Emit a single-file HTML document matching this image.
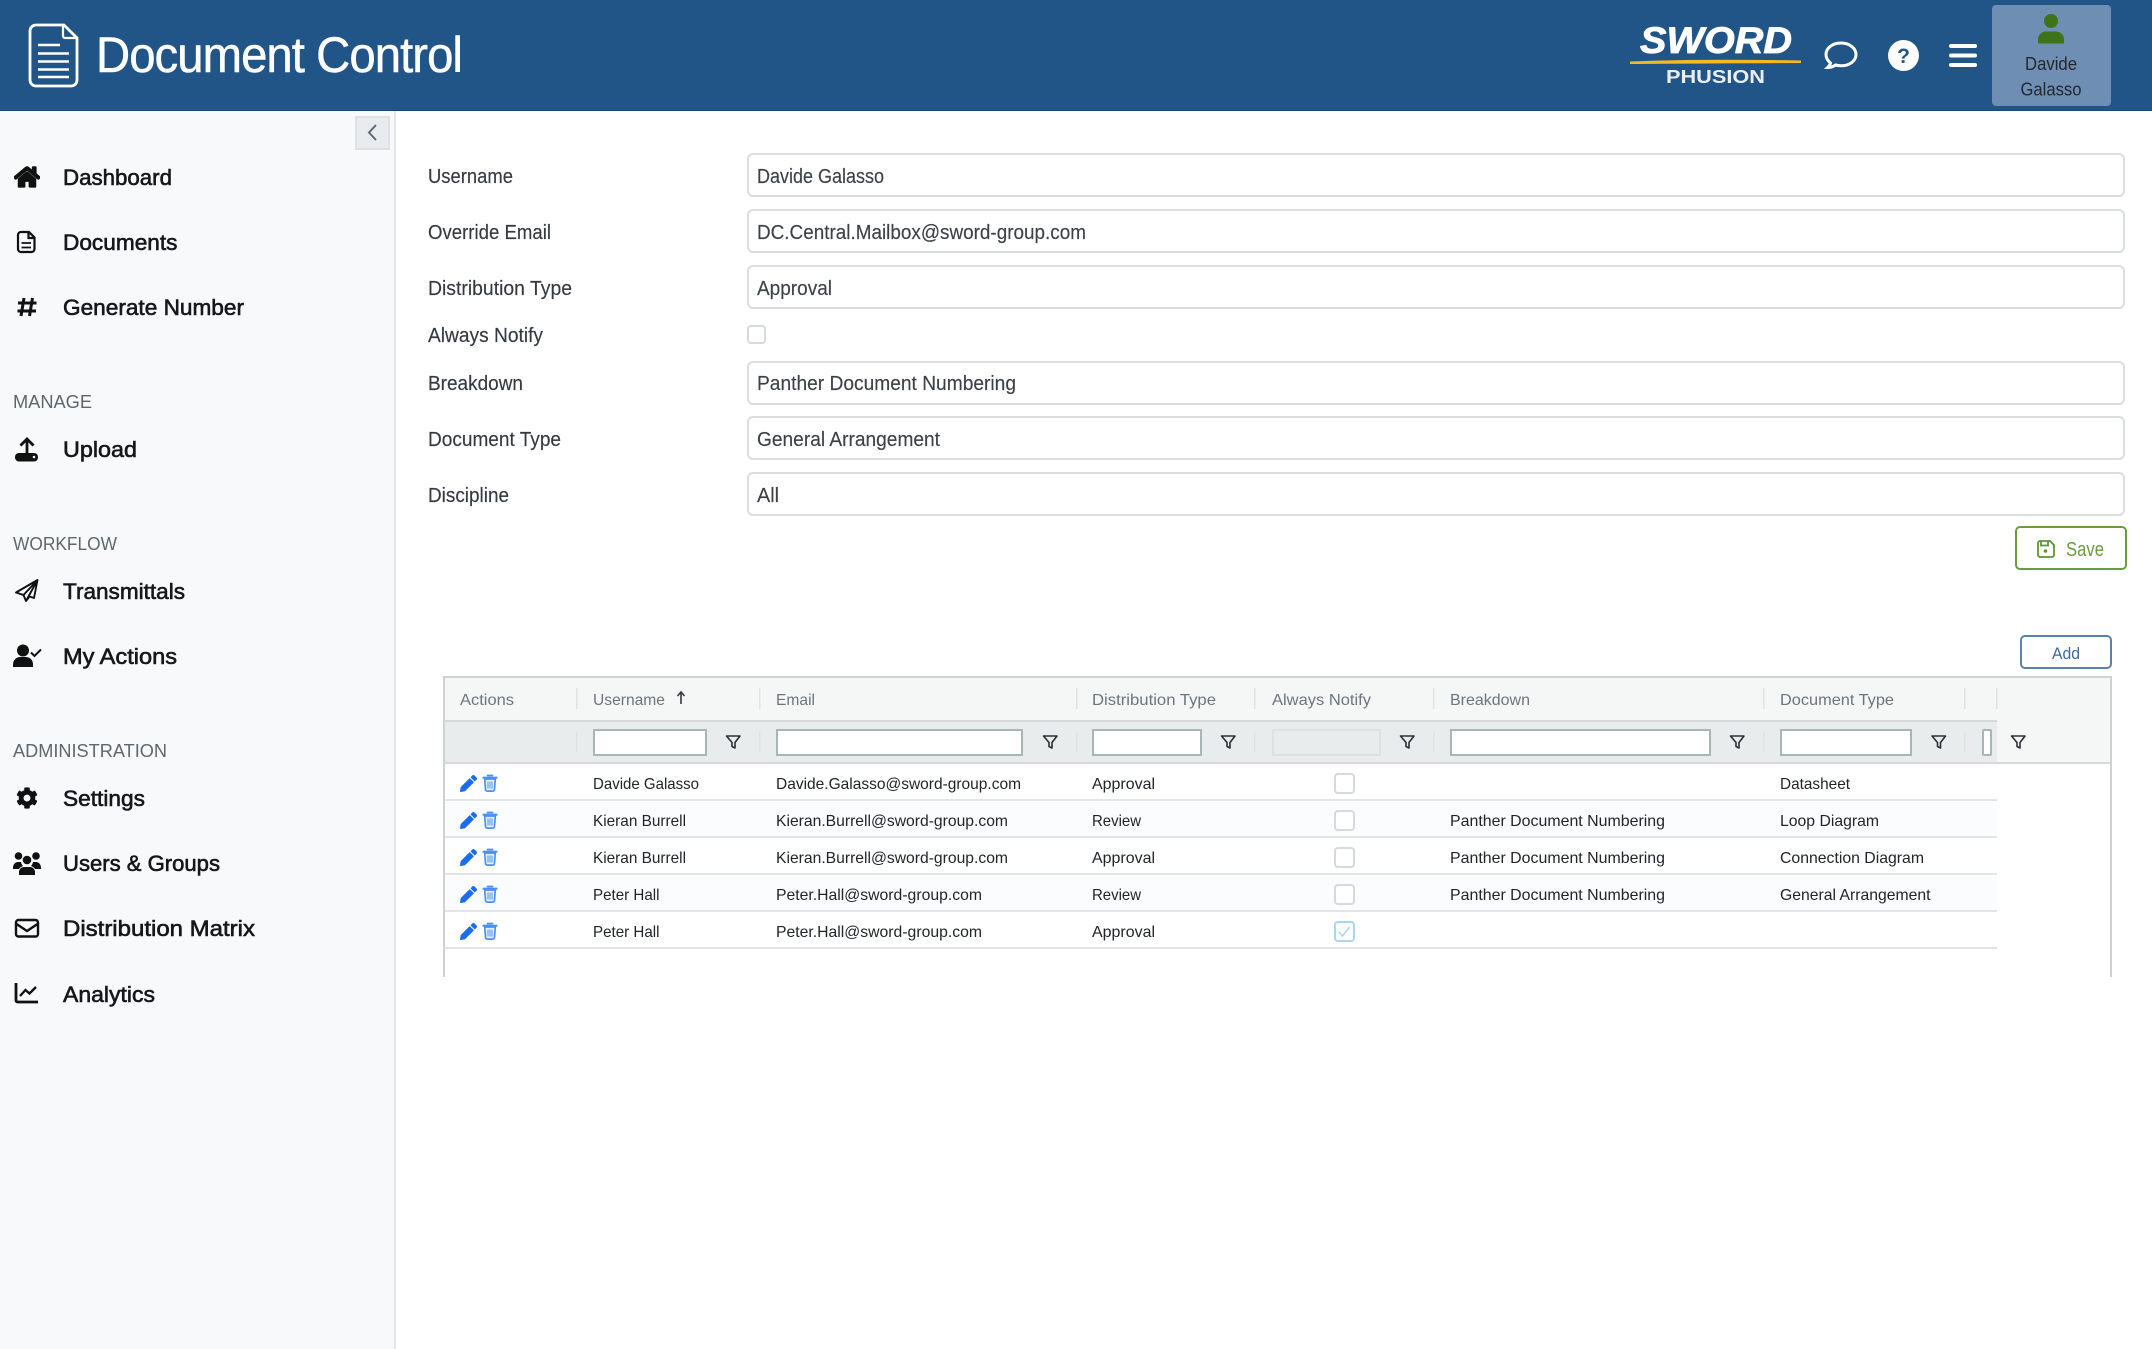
<!DOCTYPE html>
<html lang="en">
<head>
<meta charset="utf-8">
<title>Document Control</title>
<style>
html,body{margin:0;padding:0;background:#fff;width:2152px;height:1349px;overflow:hidden}
svg{display:block}
text{font-family:"Liberation Sans",sans-serif;white-space:pre}
.nav{font-size:22px;fill:#15181b;stroke:#15181b;stroke-width:.6px}
.sec{font-size:18px;fill:#5f676e}
.lab{font-size:20px;fill:#343a40;stroke:#343a40;stroke-width:.15px}
.val{font-size:20px;fill:#3c4248;stroke:#3c4248;stroke-width:.15px}
.th{font-size:16px;fill:#6c757d}
.td{font-size:16px;fill:#212529}
.inp{fill:#fff;stroke:#dadee2;stroke-width:2}
.fi{fill:#fff;stroke:#a9b6b6;stroke-width:2}
.sep{fill:#dfe3e4}
.rl{fill:#e1e5e8}
.cb{fill:#fff;stroke:#d6dade;stroke-width:2}
.flt{fill:none;stroke:#2b3036;stroke-width:1.600;stroke-linejoin:round}
</style>
</head>
<body>
<svg xmlns="http://www.w3.org/2000/svg" width="2152" height="1349" viewBox="0 0 2152 1349">
<defs>
<g id="pen"><svg x="0" y="0" width="17" height="17" viewBox="0 0 512 512"><path fill="#1c6cf0" d="M497.900 142.100l-46.100 46.100c-4.700 4.700-12.300 4.700-17 0l-111-111c-4.700-4.700-4.700-12.300 0-17l46.100-46.100c18.700-18.700 49.100-18.700 67.900 0l60.100 60.100c18.800 18.700 18.800 49.100 0 67.900zM284.200 99.800L21.600 362.400.4 483.900c-2.900 16.400 11.400 30.600 27.800 27.800l121.500-21.300 262.600-262.600c4.700-4.700 4.700-12.300 0-17l-111-111c-4.800-4.700-12.400-4.700-17.100 0z"/></svg></g>
<g id="trash" fill="none" stroke="#4a92f2">
  <path d="M27.500 4h5" stroke-width="1.800" stroke-linecap="round"/>
  <path d="M23.500 6.200h13" stroke-width="2.200" stroke-linecap="round"/>
  <path d="M24.700 7.500l.8 10.500a2 2 0 0 0 2 1.600h5a2 2 0 0 0 2-1.600l.8-10.500z" stroke-width="1.700" fill="#e6f0fd"/>
  <path d="M28 10v7M30 10v7M32 10v7" stroke-width="1"/>
</g>
<path id="funnel" class="flt" d="M0 0h13.500L8.500 6.500V12L5.500 10.500V6.500z"/>
</defs>

<!-- sidebar -->
<rect x="0" y="111" width="394" height="1238" fill="#f8f9fa"/>
<rect x="394" y="111" width="2" height="1238" fill="#e4e7ea"/>

<!-- header -->
<rect x="0" y="0" width="2152" height="111" fill="#225587"/>
<rect x="0" y="110" width="2152" height="1" fill="#1c4a78"/>
<g fill="none" stroke="#fff">
  <path d="M36 25h28l13 13v42a6 6 0 0 1-6 6H36a6 6 0 0 1-6-6V31a6 6 0 0 1 6-6z" stroke-width="2.800"/>
  <path d="M63 26v10a2 2 0 0 0 2 2h11" stroke-width="2.200"/>
  <path d="M38 45h22M38 53.500h31M38 61.500h31M38 69.500h31M38 77h31" stroke-width="2.400"/>
</g>
<text x="96" y="72" font-size="50" fill="#fff" stroke="#fff" stroke-width=".5" textLength="366" lengthAdjust="spacingAndGlyphs" letter-spacing="-1">Document Control</text>

<!-- logo -->
<text x="1640" y="53" font-size="37" font-weight="bold" font-style="italic" fill="#fff" stroke="#fff" stroke-width=".8" textLength="152" lengthAdjust="spacingAndGlyphs">SWORD</text>
<path d="M1630 61.500Q1700 58.500 1801 60.500L1801 63Q1700 63.500 1630 64z" fill="#f4b820"/>
<text x="1666" y="83" font-size="18" font-weight="bold" fill="#e9eef3" textLength="99" lengthAdjust="spacingAndGlyphs">PHUSION</text>

<!-- header icons -->
<path d="M1841 43c-8.500 0-15 5-15 11.500 0 3.500 2 6.500 4.500 8.500-.3 1.500-1.500 3-3 4.500 3 0 6-1 8-2.500 1.800.5 3.500.8 5.500.8 8.500 0 15-5 15-11.300S1849.500 43 1841 43z" fill="none" stroke="#fff" stroke-width="3"/>
<ellipse cx="1903.500" cy="55.500" rx="15.500" ry="15.500" fill="#fff"/>
<text x="1903.500" y="63" font-size="21" font-weight="bold" fill="#225587" text-anchor="middle">?</text>
<g fill="#fff"><rect x="1949" y="44" width="28" height="4" rx="2"/><rect x="1949" y="53.500" width="28" height="4" rx="2"/><rect x="1949" y="63" width="28" height="4" rx="2"/></g>
<rect x="1992" y="5" width="119" height="101" rx="4" fill="#6e8fb3"/>
<circle cx="2051" cy="21" r="7" fill="#3f7317"/>
<path d="M2038 43.500v-4c0-4.500 3.500-8 8-8h10c4.500 0 8 3.500 8 8v4z" fill="#3f7317"/>
<text x="2025" y="70" font-size="18" fill="#23282e" textLength="52" lengthAdjust="spacingAndGlyphs">Davide</text>
<text x="2020.500" y="95.500" font-size="18" fill="#23282e" textLength="61" lengthAdjust="spacingAndGlyphs">Galasso</text>

<!-- collapse -->
<rect x="356" y="117" width="33" height="32" fill="#e9ecef" stroke="#dee2e6" stroke-width="2"/>
<path d="M376 125l-7 7.500 7 7.500" fill="none" stroke="#5f6a75" stroke-width="2"/>

<!-- nav icons -->
<svg x="14" y="164" width="26" height="26" viewBox="0 0 576 576"><path fill="#111" stroke="#111" stroke-width="26" stroke-linejoin="round" transform="translate(0,32)" d="M280.370 148.260L96 300.110V464a16 16 0 0 0 16 16l112.060-.29a16 16 0 0 0 15.920-16V368a16 16 0 0 1 16-16h64a16 16 0 0 1 16 16v95.640a16 16 0 0 0 16 16.050L464 480a16 16 0 0 0 16-16V300L295.670 148.260a12.190 12.190 0 0 0-15.300 0zM571.600 251.470L488 182.560V44.050a12 12 0 0 0-12-12h-56a12 12 0 0 0-12 12v72.610L318.470 43a48 48 0 0 0-61 0L4.340 251.470a12 12 0 0 0-1.600 16.900l25.500 31A12 12 0 0 0 45.150 301l235.220-193.740a12.190 12.190 0 0 1 15.300 0L530.900 301a12 12 0 0 0 16.900-1.600l25.500-31a12 12 0 0 0-1.700-16.930z"/></svg>
<g fill="none" stroke="#111" stroke-width="2.200">
  <path d="M21 232h8l5.500 5.500V249a3 3 0 0 1-3 3H21a3 3 0 0 1-3-3v-14a3 3 0 0 1 3-3z"/>
  <path d="M28.500 232.500v5.500h5.500"/>
  <path d="M21.500 243h9.500M21.500 247.500h9.500" stroke-width="1.800"/>
</g>
<path d="M24 298l-3 18M32.500 298l-3 18M18 303h18.500M17.500 311h18.500" fill="none" stroke="#111" stroke-width="3"/>
<path d="M27 455V439M20.500 445.500L27 439l6.500 6.500" fill="none" stroke="#111" stroke-width="2.800"/>
<rect x="15" y="453" width="23" height="8.500" rx="4" fill="#111"/>
<circle cx="34" cy="457" r="1.300" fill="#f8f9fa"/>
<path d="M37.500 580L16 592.500l7.500 2.500 2.500 6 3.500-4.500 4.500 1.500zM23.500 595L37.500 580 26 601" fill="none" stroke="#111" stroke-width="1.900" stroke-linejoin="round"/>
<circle cx="23" cy="650.500" r="6" fill="#111"/>
<path d="M13 667v-2.500c0-4.500 3.500-7.500 7.500-7.500h5c4.500 0 7.500 3 7.500 7.500v2.500z" fill="#111"/>
<path d="M31 652.500l3.500 3.500 6.500-6.500" fill="none" stroke="#111" stroke-width="2"/>
<svg x="16" y="787" width="22" height="22" viewBox="0 0 512 512"><path fill="#111" d="M487.400 315.700l-42.600-24.600c4.300-23.200 4.300-47 0-70.200l42.600-24.600c4.900-2.800 7.100-8.600 5.500-14-11.100-35.600-30-67.800-54.700-94.600-3.800-4.100-10-5.100-14.800-2.300L380.800 110c-17.900-15.400-38.500-27.300-60.800-35.100V25.800c0-5.600-3.900-10.500-9.400-11.700-36.700-8.200-74.300-7.800-109.200 0-5.500 1.200-9.400 6.100-9.400 11.700V75c-22.200 7.900-42.800 19.800-60.800 35.100L88.700 85.500c-4.900-2.800-11-1.900-14.800 2.300-24.700 26.700-43.600 58.900-54.700 94.600-1.700 5.400.6 11.200 5.500 14L67.300 221c-4.300 23.200-4.300 47 0 70.200l-42.600 24.600c-4.900 2.800-7.100 8.600-5.500 14 11.100 35.600 30 67.800 54.700 94.600 3.800 4.100 10 5.100 14.800 2.300l42.600-24.600c17.900 15.400 38.500 27.300 60.800 35.100v49.200c0 5.600 3.900 10.500 9.400 11.700 36.700 8.200 74.300 7.800 109.200 0 5.500-1.200 9.400-6.100 9.400-11.700v-49.200c22.200-7.900 42.800-19.800 60.800-35.100l42.600 24.600c4.900 2.800 11 1.900 14.800-2.300 24.700-26.700 43.600-58.900 54.700-94.600 1.500-5.500-.7-11.300-5.600-14.100zM256 336c-44.100 0-80-35.900-80-80s35.900-80 80-80 80 35.900 80 80-35.900 80-80 80z"/></svg>
<g fill="#111">
  <circle cx="18.500" cy="856" r="3.800"/><circle cx="36" cy="856" r="3.800"/><circle cx="27" cy="860" r="4.300"/>
  <path d="M13 868c0-3.500 2-6 5-6h3c.5 2 1 3 2 4-2.500 1-3.500 2-4 3h-6zM41 868c0-3.500-2-6-5-6h-3c-.5 2-1 3-2 4 2.500 1 3.500 2 4 3h6zM19 875v-3c0-3 2.500-5 5-5h6c2.500 0 5 2 5 5v3z"/>
</g>
<g fill="none" stroke="#111" stroke-width="2.400">
  <rect x="16" y="920" width="22" height="16.500" rx="2.500"/>
  <path d="M16.500 924l10.500 7 10.500-7"/>
</g>
<path d="M16 983v17.500a1.500 1.500 0 0 0 1.500 1.500H38" fill="none" stroke="#111" stroke-width="2.800"/>
<path d="M20 996l5.500-6 4 3.500 6.500-6.500" fill="none" stroke="#111" stroke-width="2.400"/>

<!-- nav text -->
<text class="nav" x="63" y="185" textLength="109" lengthAdjust="spacingAndGlyphs">Dashboard</text>
<text class="nav" x="63" y="250" textLength="114.500" lengthAdjust="spacingAndGlyphs">Documents</text>
<text class="nav" x="63" y="315" textLength="181" lengthAdjust="spacingAndGlyphs">Generate Number</text>
<text class="sec" x="13" y="408" textLength="79" lengthAdjust="spacingAndGlyphs">MANAGE</text>
<text class="nav" x="63" y="457" textLength="74" lengthAdjust="spacingAndGlyphs">Upload</text>
<text class="sec" x="13" y="550" textLength="104" lengthAdjust="spacingAndGlyphs">WORKFLOW</text>
<text class="nav" x="63" y="599" textLength="122" lengthAdjust="spacingAndGlyphs">Transmittals</text>
<text class="nav" x="63" y="664" textLength="114" lengthAdjust="spacingAndGlyphs">My Actions</text>
<text class="sec" x="13" y="757" textLength="154" lengthAdjust="spacingAndGlyphs">ADMINISTRATION</text>
<text class="nav" x="63" y="806" textLength="82" lengthAdjust="spacingAndGlyphs">Settings</text>
<text class="nav" x="63" y="871" textLength="157" lengthAdjust="spacingAndGlyphs">Users &amp; Groups</text>
<text class="nav" x="63" y="936" textLength="192" lengthAdjust="spacingAndGlyphs">Distribution Matrix</text>
<text class="nav" x="63" y="1002" textLength="92" lengthAdjust="spacingAndGlyphs">Analytics</text>

<!-- form -->
<text class="lab" x="428" y="183" textLength="85" lengthAdjust="spacingAndGlyphs">Username</text>
<text class="lab" x="428" y="239" textLength="123" lengthAdjust="spacingAndGlyphs">Override Email</text>
<text class="lab" x="428" y="295" textLength="144" lengthAdjust="spacingAndGlyphs">Distribution Type</text>
<text class="lab" x="428" y="342" textLength="115" lengthAdjust="spacingAndGlyphs">Always Notify</text>
<text class="lab" x="428" y="390" textLength="95" lengthAdjust="spacingAndGlyphs">Breakdown</text>
<text class="lab" x="428" y="446" textLength="133" lengthAdjust="spacingAndGlyphs">Document Type</text>
<text class="lab" x="428" y="502" textLength="81" lengthAdjust="spacingAndGlyphs">Discipline</text>

<rect class="inp" x="748" y="154" width="1376" height="42" rx="5"/>
<rect class="inp" x="748" y="210" width="1376" height="42" rx="5"/>
<rect class="inp" x="748" y="266" width="1376" height="42" rx="5"/>
<rect class="cb" x="748" y="326" width="17" height="17" rx="3"/>
<rect class="inp" x="748" y="362" width="1376" height="42" rx="5"/>
<rect class="inp" x="748" y="417" width="1376" height="42" rx="5"/>
<rect class="inp" x="748" y="473" width="1376" height="42" rx="5"/>

<text class="val" x="757" y="183" textLength="127" lengthAdjust="spacingAndGlyphs">Davide Galasso</text>
<text class="val" x="757" y="239" textLength="329" lengthAdjust="spacingAndGlyphs">DC.Central.Mailbox@sword-group.com</text>
<text class="val" x="757" y="295" textLength="75" lengthAdjust="spacingAndGlyphs">Approval</text>
<text class="val" x="757" y="390" textLength="259" lengthAdjust="spacingAndGlyphs">Panther Document Numbering</text>
<text class="val" x="757" y="446" textLength="183" lengthAdjust="spacingAndGlyphs">General Arrangement</text>
<text class="val" x="757" y="502" textLength="22" lengthAdjust="spacingAndGlyphs">All</text>

<!-- save -->
<rect x="2016" y="527" width="110" height="42" rx="4" fill="#fff" stroke="#6c9c40" stroke-width="2"/>
<g fill="none" stroke="#5f9432" stroke-width="1.800">
  <path d="M2040 541h10l4 4v10a2 2 0 0 1-2 2h-12a2 2 0 0 1-2-2v-12a2 2 0 0 1 2-2z"/>
  <path d="M2041 541v4.500h7V541"/>
</g>
<circle cx="2045.500" cy="551" r="1.800" fill="#5f9432"/>
<text x="2066" y="556" font-size="20" fill="#6c9a3e" textLength="38" lengthAdjust="spacingAndGlyphs">Save</text>

<!-- add -->
<rect x="2021" y="636" width="90" height="32" rx="4" fill="#fff" stroke="#5a82ad" stroke-width="2"/>
<text x="2052" y="659" font-size="17" fill="#3f6a9c" textLength="28" lengthAdjust="spacingAndGlyphs">Add</text>

<!-- table -->
<rect x="444" y="678" width="1667" height="84" fill="#f5f7f7"/>
<rect x="444" y="721" width="1553" height="41" fill="#e9ecec"/>
<rect x="444" y="720" width="1553" height="2" fill="#d3d8d9"/>
<rect x="444" y="676" width="1668" height="2" fill="#d0d4d7"/>
<rect x="443" y="676" width="2" height="301" fill="#ced2d5"/>
<rect x="2110" y="676" width="2" height="301" fill="#ced2d5"/>
<rect x="444" y="762" width="1667" height="2" fill="#d5d9da"/>
<rect x="445" y="802" width="1552" height="35" fill="#fbfcfe"/>
<rect x="445" y="876" width="1552" height="35" fill="#fbfcfe"/>
<rect class="rl" x="445" y="799" width="1552" height="2"/>
<rect class="rl" x="445" y="836" width="1552" height="2"/>
<rect class="rl" x="445" y="873" width="1552" height="2"/>
<rect class="rl" x="445" y="910" width="1552" height="2"/>
<rect class="rl" x="445" y="947" width="1552" height="2"/>

<!-- separators -->
<g class="sep">
<rect x="576" y="688" width="1.500" height="21"/><rect x="759" y="688" width="1.500" height="21"/><rect x="1076" y="688" width="1.500" height="21"/><rect x="1254" y="688" width="1.500" height="21"/><rect x="1433" y="688" width="1.500" height="21"/><rect x="1763" y="688" width="1.500" height="21"/><rect x="1964" y="688" width="1.500" height="21"/><rect x="1996" y="688" width="1.500" height="21"/>
<rect x="576" y="732" width="1.500" height="20"/><rect x="759" y="732" width="1.500" height="20"/><rect x="1076" y="732" width="1.500" height="20"/><rect x="1254" y="732" width="1.500" height="20"/><rect x="1433" y="732" width="1.500" height="20"/><rect x="1763" y="732" width="1.500" height="20"/><rect x="1964" y="732" width="1.500" height="20"/>
</g>

<!-- headers -->
<text class="th" x="460" y="705" textLength="54" lengthAdjust="spacingAndGlyphs">Actions</text>
<text class="th" x="593" y="705" textLength="72" lengthAdjust="spacingAndGlyphs">Username</text>
<path d="M681 704v-12M677.500 696l3.500-4 3.500 4" fill="none" stroke="#343a40" stroke-width="1.600"/>
<text class="th" x="776" y="705" textLength="39" lengthAdjust="spacingAndGlyphs">Email</text>
<text class="th" x="1092" y="705" textLength="124" lengthAdjust="spacingAndGlyphs">Distribution Type</text>
<text class="th" x="1272" y="705" textLength="99" lengthAdjust="spacingAndGlyphs">Always Notify</text>
<text class="th" x="1450" y="705" textLength="80" lengthAdjust="spacingAndGlyphs">Breakdown</text>
<text class="th" x="1780" y="705" textLength="114" lengthAdjust="spacingAndGlyphs">Document Type</text>

<!-- filters -->
<rect class="fi" x="594" y="730" width="112" height="25"/>
<rect class="fi" x="777" y="730" width="245" height="25"/>
<rect class="fi" x="1093" y="730" width="108" height="25"/>
<rect x="1273" y="730" width="107" height="25" fill="#e9ecec" stroke="#dde1e1" stroke-width="2"/>
<rect class="fi" x="1451" y="730" width="259" height="25"/>
<rect class="fi" x="1781" y="730" width="130" height="25"/>
<rect class="fi" x="1983" y="730" width="8" height="25" rx="1"/>
<use href="#funnel" x="726.500" y="736"/>
<use href="#funnel" x="1043.500" y="736"/>
<use href="#funnel" x="1221.500" y="736"/>
<use href="#funnel" x="1400.500" y="736"/>
<use href="#funnel" x="1730.500" y="736"/>
<use href="#funnel" x="1932" y="736"/>
<use href="#funnel" x="2011.500" y="736"/>

<!-- row action icons -->
<use href="#pen" x="460" y="775"/><use href="#trash" x="460" y="771.500"/>
<use href="#pen" x="460" y="812"/><use href="#trash" x="460" y="808.500"/>
<use href="#pen" x="460" y="849"/><use href="#trash" x="460" y="845.500"/>
<use href="#pen" x="460" y="886"/><use href="#trash" x="460" y="882.500"/>
<use href="#pen" x="460" y="923"/><use href="#trash" x="460" y="919.500"/>

<!-- rows -->
<text class="td" x="593" y="789" textLength="106" lengthAdjust="spacingAndGlyphs">Davide Galasso</text>
<text class="td" x="776" y="789" textLength="245" lengthAdjust="spacingAndGlyphs">Davide.Galasso@sword-group.com</text>
<text class="td" x="1092" y="789" textLength="63" lengthAdjust="spacingAndGlyphs">Approval</text>
<rect class="cb" x="1335" y="774" width="19" height="19" rx="3"/>
<text class="td" x="1780" y="789" textLength="70" lengthAdjust="spacingAndGlyphs">Datasheet</text>

<text class="td" x="593" y="826" textLength="93" lengthAdjust="spacingAndGlyphs">Kieran Burrell</text>
<text class="td" x="776" y="826" textLength="232" lengthAdjust="spacingAndGlyphs">Kieran.Burrell@sword-group.com</text>
<text class="td" x="1092" y="826" textLength="49" lengthAdjust="spacingAndGlyphs">Review</text>
<rect class="cb" x="1335" y="811" width="19" height="19" rx="3"/>
<text class="td" x="1450" y="826" textLength="215" lengthAdjust="spacingAndGlyphs">Panther Document Numbering</text>
<text class="td" x="1780" y="826" textLength="99" lengthAdjust="spacingAndGlyphs">Loop Diagram</text>

<text class="td" x="593" y="863" textLength="93" lengthAdjust="spacingAndGlyphs">Kieran Burrell</text>
<text class="td" x="776" y="863" textLength="232" lengthAdjust="spacingAndGlyphs">Kieran.Burrell@sword-group.com</text>
<text class="td" x="1092" y="863" textLength="63" lengthAdjust="spacingAndGlyphs">Approval</text>
<rect class="cb" x="1335" y="848" width="19" height="19" rx="3"/>
<text class="td" x="1450" y="863" textLength="215" lengthAdjust="spacingAndGlyphs">Panther Document Numbering</text>
<text class="td" x="1780" y="863" textLength="144" lengthAdjust="spacingAndGlyphs">Connection Diagram</text>

<text class="td" x="593" y="900" textLength="66.500" lengthAdjust="spacingAndGlyphs">Peter Hall</text>
<text class="td" x="776" y="900" textLength="206" lengthAdjust="spacingAndGlyphs">Peter.Hall@sword-group.com</text>
<text class="td" x="1092" y="900" textLength="49" lengthAdjust="spacingAndGlyphs">Review</text>
<rect class="cb" x="1335" y="885" width="19" height="19" rx="3"/>
<text class="td" x="1450" y="900" textLength="215" lengthAdjust="spacingAndGlyphs">Panther Document Numbering</text>
<text class="td" x="1780" y="900" textLength="150.500" lengthAdjust="spacingAndGlyphs">General Arrangement</text>

<text class="td" x="593" y="937" textLength="66.500" lengthAdjust="spacingAndGlyphs">Peter Hall</text>
<text class="td" x="776" y="937" textLength="206" lengthAdjust="spacingAndGlyphs">Peter.Hall@sword-group.com</text>
<text class="td" x="1092" y="937" textLength="63" lengthAdjust="spacingAndGlyphs">Approval</text>
<rect x="1335" y="922" width="19" height="19" rx="3" fill="#fff" stroke="#a5d8f7" stroke-width="2"/>
<path d="M1339 932l3.500 4 7-9" fill="none" stroke="#a5d8f7" stroke-width="1.500"/>
</svg>
</body>
</html>
